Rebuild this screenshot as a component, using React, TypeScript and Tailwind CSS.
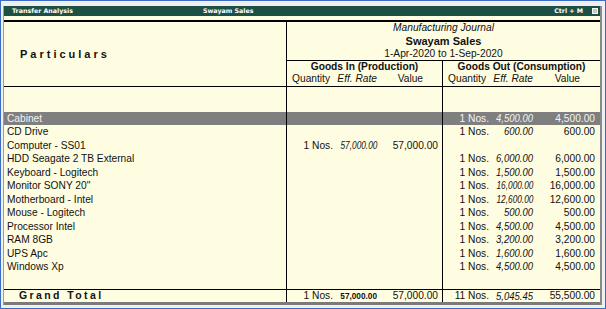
const rows: { name: string; inn?: string[]; out?: string[] }[] = [
  { name: 'Cabinet', out: ['1 Nos.', '4,500.00', '4,500.00'] },
  { name: 'CD Drive', out: ['1 Nos.', '600.00', '600.00'] },
  { name: 'Computer - SS01', inn: ['1 Nos.', '57,000.00', '57,000.00'] },
  { name: 'HDD Seagate 2 TB External', out: ['1 Nos.', '6,000.00', '6,000.00'] },
  { name: 'Keyboard - Logitech', out: ['1 Nos.', '1,500.00', '1,500.00'] },
  { name: 'Monitor SONY 20"', out: ['1 Nos.', '16,000.00', '16,000.00'] },
  { name: 'Motherboard - Intel', out: ['1 Nos.', '12,600.00', '12,600.00'] },
  { name: 'Mouse - Logitech', out: ['1 Nos.', '500.00', '500.00'] },
  { name: 'Processor Intel', out: ['1 Nos.', '4,500.00', '4,500.00'] },
  { name: 'RAM 8GB', out: ['1 Nos.', '3,200.00', '3,200.00'] },
  { name: 'UPS Apc', out: ['1 Nos.', '1,600.00', '1,600.00'] },
  { name: 'Windows Xp', out: ['1 Nos.', '4,500.00', '4,500.00'] },
];

const Amounts = ({ v, pr, boldRate }: { v?: string[]; pr: string; boldRate?: boolean }) => {
  if (!v) return null;
  // long rates are squeezed into the same field width, as in the original
  const rateClass = boldRate
    ? 'w-[44px] text-right text-[9.6px] font-bold origin-right scale-x-[0.86]'
    : v[1].length > 8
      ? 'w-[44px] text-right text-[10px] italic origin-right scale-x-[0.83]'
      : 'w-[44px] text-right text-[10px] italic origin-right scale-x-[0.95]';
  return (
    <div className={`flex h-full items-center ${pr}`}>
      <span className="w-[46px] text-right">{v[0]}</span>
      <span className={rateClass}>{v[1]}</span>
      <span className="flex-1 text-right">{v[2]}</span>
    </div>
  );
};

const Band = ({
  h,
  active,
  children,
  inn,
  out,
}: {
  h: string;
  active?: boolean;
  children?: React.ReactNode;
  inn?: string[];
  out?: string[];
}) => (
  <div className={`flex ${h} ${active ? 'bg-[#7f7f7f] text-[#f4f4f4]' : ''}`}>
    <div className="w-[283px] border-r border-black pl-[3px] flex items-center">{children}</div>
    <div className="w-[156px] border-r border-black">
      <Amounts v={inn} pr="pr-[4px]" />
    </div>
    <div className="flex-1">
      <Amounts v={out} pr="pr-[5px]" />
    </div>
  </div>
);

export default function App() {
  return (
    <div className="w-[606px] h-[309px] border border-[#3d6dc3] bg-[#efefef] pt-[5px] pl-[2px] pr-[3px] pb-[3px] font-['Liberation_Sans',Arial,sans-serif] text-[10.2px] text-[#111]">
      <div className="flex flex-col h-full w-[599px] border-l border-[#9c9c9c] border-r-2 border-r-[#8a8a8a] bg-[#fffde1]">
        {/* title bar */}
        <div className="flex items-center h-[10px] bg-[#1d5045] text-white font-['DejaVu_Sans',sans-serif] font-bold text-[6.3px] pl-[8px] pr-[2px]">
          <span className="w-[191px]">Transfer Analysis</span>
          <span>Swayam Sales</span>
          <span className="flex-1" />
          <span>Ctrl + M</span>
          <span className="ml-[9px] w-[6px] h-[6px] bg-[#c8c8c8] border border-[#f4f4f4]" />
        </div>
        <div className="h-[4px]" />

        {/* header */}
        <div className="flex h-[68px] border-t-2 border-b border-black">
          <div className="w-[283px] border-r border-black flex items-center pl-[16px]">
            <span className="text-[11px] font-bold tracking-[3px]">Particulars</span>
          </div>
          <div className="flex-1 flex flex-col">
            <div className="h-[39px] border-b border-black flex flex-col items-center">
              <span className="italic leading-[12px]">Manufacturing Journal</span>
              <span className="font-bold text-[11px] leading-[14px]">Swayam Sales</span>
              <span className="leading-[11px]">1-Apr-2020 to 1-Sep-2020</span>
            </div>
            <div className="flex flex-1">
              <div className="w-[156px] border-r border-black flex flex-col">
                <span className="font-bold text-center leading-[11px]">Goods In (Production)</span>
                <div className="flex leading-[13px] pr-[4px]">
                  <span className="w-[43px] text-right">Quantity</span>
                  <span className="w-[47px] text-right italic">Eff. Rate</span>
                  <span className="flex-1 text-right pr-[15px]">Value</span>
                </div>
              </div>
              <div className="flex-1 flex flex-col">
                <span className="font-bold text-center leading-[11px]">Goods Out (Consumption)</span>
                <div className="flex leading-[13px] pr-[5px]">
                  <span className="w-[43px] text-right">Quantity</span>
                  <span className="w-[47px] text-right italic">Eff. Rate</span>
                  <span className="flex-1 text-right pr-[15px]">Value</span>
                </div>
              </div>
            </div>
          </div>
        </div>

        {/* body */}
        <Band h="h-[24.5px]" />
        {rows.map((r, i) => (
          <Band key={r.name} h="h-[13.5px]" active={i === 0} inn={r.inn} out={r.out}>
            {r.name}
          </Band>
        ))}
        <Band h="h-[15.5px]" />

        {/* total */}
        <div className="flex h-[16px] border-t border-black border-b-[3px] border-b-[#7a7a7a]">
          <div className="w-[283px] border-r border-black flex items-center pl-[15px]">
            <span className="font-bold text-[10.5px] tracking-[2.4px]">Grand Total</span>
          </div>
          <div className="w-[156px] border-r border-black">
            <Amounts v={['1 Nos.', '57,000.00', '57,000.00']} pr="pr-[4px]" boldRate />
          </div>
          <div className="flex-1">
            <Amounts v={['11 Nos.', '5,045.45', '55,500.00']} pr="pr-[5px]" />
          </div>
        </div>
      </div>
    </div>
  );
}
